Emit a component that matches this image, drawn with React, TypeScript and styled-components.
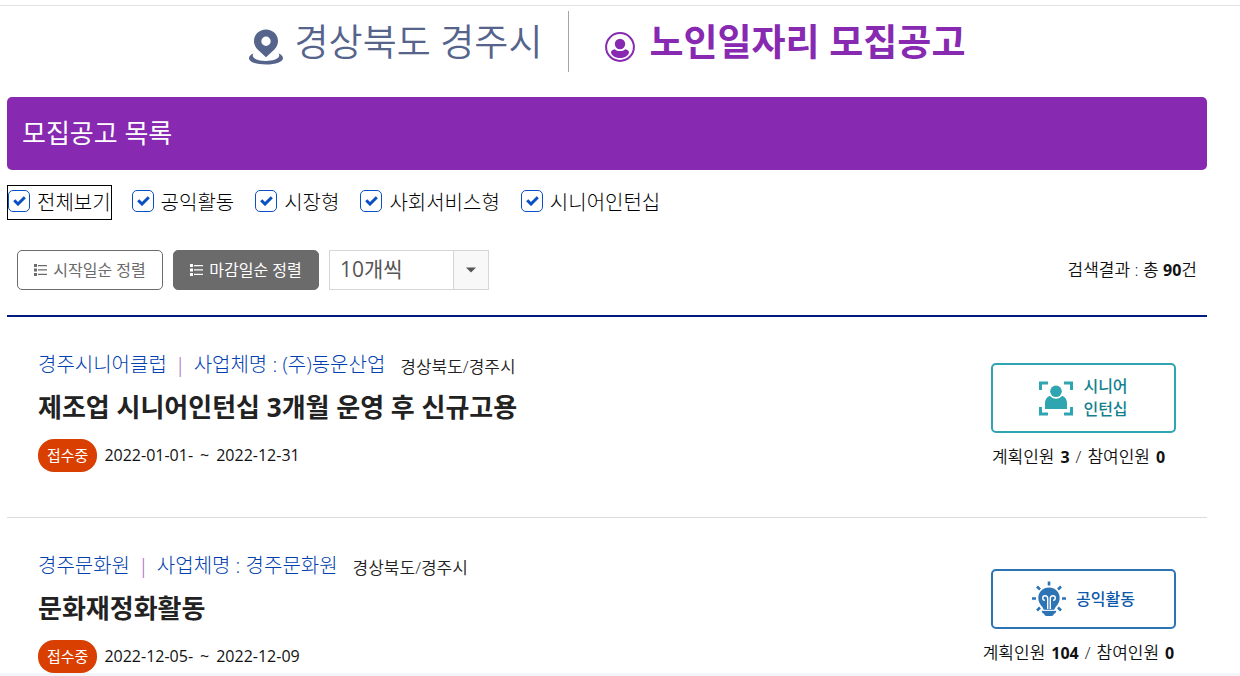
import React, { useState } from "react";
import styled, { createGlobalStyle, css } from "styled-components";

const GlobalStyle = createGlobalStyle`
  * { box-sizing: border-box; }
  body {
    margin: 0;
    background: #fff;
    color: #111;
    font-family: "Open Sans", "Noto Sans CJK KR", sans-serif;
    font-size: 16px;
    line-height: 24px;
  }
  h1, h2, h3, p, ul { margin: 0; padding: 0; }
  ul { list-style: none; }
  button, select, input { font: inherit; margin: 0; }
`;

const Page = styled.div`
  margin-top: 5px;
  border-top: 1px solid #e2e2e2;
`;

const Container = styled.main`
  padding: 0 33px 0 7px;
`;

const Header = styled.header`
  display: flex;
  justify-content: center;
  align-items: center;
  padding: 5px 0 25px;
`;

const Region = styled.p`
  display: flex;
  align-items: center;
  gap: 12px;
  height: 61px;
  padding-right: 26px;
  border-right: 1px solid #a5a5a5;
  color: #56648c;
  font-size: 37px;
  font-weight: 350;
  line-height: 61px;
  white-space: nowrap;
  svg { margin-top: 11px; }
`;

const PageTitle = styled.h1`
  display: flex;
  align-items: center;
  gap: 14px;
  padding-left: 36px;
  color: #872ab1;
  font-size: 37px;
  font-weight: 700;
  line-height: 61px;
  white-space: nowrap;
  svg { margin-top: 10px; }
`;

const Banner = styled.h2`
  padding: 16px 15px;
  border-radius: 5px;
  background: #872ab1;
  color: #fff;
  font-size: 26px;
  font-weight: 400;
  line-height: 41px;
`;

const Filters = styled.div`
  display: flex;
  flex-wrap: wrap;
  gap: 19px;
  padding-top: 15px;
`;

const FilterLabel = styled.label<{ $outlined?: boolean }>`
  display: flex;
  align-items: center;
  gap: 7px;
  height: 35px;
  border: 1px solid ${(p) => (p.$outlined ? "#000" : "transparent")};
  color: #000;
  font-size: 20px;
  font-weight: 300;
  white-space: nowrap;
`;

const TickWrap = styled.span`
  position: relative;
  display: flex;
  margin-top: -3px;
  svg { position: absolute; left: 5px; top: 6px; pointer-events: none; }
`;

const Tick = styled.input`
  appearance: none;
  width: 22px;
  height: 22px;
  border: 1px solid #0a50c4;
  border-radius: 5px;
  background: #fff;
  &:not(:checked) + svg { display: none; }
`;

const Toolbar = styled.div`
  display: flex;
  align-items: center;
  gap: 10px;
  padding: 30px 10px 25px;
  border-bottom: 2px solid #001b80;
`;

const SortButton = styled.button<{ $active?: boolean }>`
  display: flex;
  justify-content: center;
  align-items: center;
  gap: 6px;
  width: 146px;
  height: 40px;
  padding: 0;
  border: 1px solid #6b6b6b;
  border-radius: 5px;
  background: ${(p) => (p.$active ? "#6b6b6b" : "#fff")};
  color: ${(p) => (p.$active ? "#fff" : "#6b6b6b")};
  font-size: 16px;
  white-space: nowrap;
`;

const SelectWrap = styled.span`
  position: relative;
  display: flex;
`;

const Select = styled.select`
  appearance: none;
  width: 160px;
  height: 40px;
  padding: 0 40px 2px 10px;
  border: 1px solid #d6d6d6;
  border-radius: 0;
  background: #fff;
  color: #555;
  font-size: 21px;
  font-weight: 400;
`;

const SelectArrow = styled.span`
  position: absolute;
  inset: 1px 1px 1px auto;
  width: 35px;
  display: flex;
  justify-content: center;
  align-items: center;
  border-left: 1px solid #d6d6d6;
  background: #f8f8f8;
  pointer-events: none;
`;

const ResultCount = styled.p`
  margin-left: auto;
  font-size: 17px;
  font-weight: 350;
  b { font-size: 16px; font-weight: 700; }
`;

const Row = styled.li`
  display: flex;
  justify-content: space-between;
  padding: 33px 22px 45px 31px;
  border-bottom: 1px solid #dcdcdc;
  &:last-child { padding-bottom: 0; border-bottom: 0; }
`;

const Meta = styled.div`
  display: flex;
  align-items: center;
  gap: 15px;
  height: 30px;
  white-space: nowrap;
`;

const OrgLink = styled.a`
  display: flex;
  gap: 8px;
  color: #0040b0;
  font-size: 20px;
  font-weight: 300;
  line-height: 30px;
  text-decoration: none;
  i { color: #a060c0; font-style: normal; }
`;

const Area = styled.span`
  padding-top: 3px;
  color: #222;
  font-size: 17px;
  font-weight: 350;
`;

const JobTitle = styled.h3`
  margin: 7px 0 12px;
  color: #222;
  font-size: 26px;
  font-weight: 700;
  line-height: 40px;
`;

const Period = styled.div`
  display: flex;
  align-items: center;
  gap: 7px;
`;

const Dates = styled.p`
  display: flex;
  gap: 7px;
  padding-bottom: 2px;
`;

const Status = styled.span`
  padding: 0 9px;
  border-radius: 16px;
  background: #d93f00;
  color: #fff;
  font-size: 15px;
  font-weight: 400;
  line-height: 33px;
`;

const Side = styled.div`
  display: flex;
  flex-direction: column;
  justify-content: center;
  align-items: center;
  gap: 12px;
  width: 203px;
  padding-top: 10px;
`;

const tones = {
  teal: css`border-color: #2fa5b2; color: #12818e;`,
  blue: css`border-color: #2d74b5; color: #0d59a9;`,
};

const TypeBadge = styled.div<{ $tone: "teal" | "blue" }>`
  display: flex;
  justify-content: center;
  align-items: center;
  gap: 10px;
  width: 185px;
  min-height: 60px;
  padding: 10px 0;
  border: 2px solid;
  border-radius: 5px;
  font-size: 16px;
  font-weight: 500;
  line-height: 23px;
  ${(p) => tones[p.$tone]}
  span { display: block; }
`;

const Counts = styled.p`
  display: flex;
  gap: 6px;
  padding-right: 10px;
  font-size: 17px;
  font-weight: 350;
  white-space: nowrap;
  b { font-size: 16px; font-weight: 700; }
`;

const Footer = styled.footer`
  height: 3px;
  background: #f2f5f9;
`;

const PinIcon = () => (
  <svg width="34" height="36" viewBox="0 0 34 36" fill="currentColor" aria-hidden="true">
    <path
      fillRule="evenodd"
      d="M17 .5C10.300 .5 5 5.500 5 12.200c0 3.200 1.500 6 3.600 8.200L17 28.300l8.400-7.900c2.100-2.200 3.600-5 3.600-8.200C29 5.500 23.700.5 17 .5Zm0 7a4.700 4.700 0 1 1 0 9.400 4.700 4.700 0 0 1 0-9.400Z"
    />
    <path d="M4.600 24.600C1.700 25.600 0 27.300 0 29.200c0 3.600 7.200 6.300 17 6.300s17-2.700 17-6.300c0-1.900-1.700-3.600-4.600-4.600.9 1 1.100 1.900.6 3C28.800 30.300 23.600 32 17 32S5.200 30.300 4 27.600c-.5-1.100-.3-2 .6-3Z" />
  </svg>
);

const UserIcon = () => (
  <svg width="30" height="30" viewBox="0 0 30 30" fill="currentColor" aria-hidden="true">
    <circle cx="15" cy="15" r="13.900" fill="none" stroke="currentColor" strokeWidth="2" />
    <circle cx="15" cy="12" r="5.200" />
    <path d="M9.600 17.200c-2.200.5-3.600 1.600-3.600 3C6 23 10 26 15 26s9-3 9-5.800c0-1.400-1.400-2.500-3.600-3-1.400 1.200-3.300 1.900-5.400 1.900s-4-.7-5.400-1.900Z" />
  </svg>
);

const CheckIcon = () => (
  <svg width="13" height="10" viewBox="0 0 13 10" fill="none" stroke="#0a50c4" strokeWidth="3" aria-hidden="true">
    <path d="M1.200 4.300 5 8 11.800 1.300" />
  </svg>
);

const ListIcon = () => (
  <svg width="13" height="12" viewBox="0 0 13 12" fill="currentColor" aria-hidden="true">
    <path d="M0 0h3v3H0zM0 4.500h3v3H0zM0 9h3v3H0zM4 1h9v1.300H4zM4 5.300h9v1.300H4zM4 9.700h9V11H4z" />
  </svg>
);

const InternIcon = () => (
  <svg width="34" height="35" viewBox="0 0 34 35" fill="#2fa5b2" aria-hidden="true">
    <path
      d="M1.500 9V2H9M25 2h7.500v7M32.500 26v7H25M9 33H1.500v-7"
      fill="none"
      stroke="#2fa5b2"
      strokeWidth="3"
    />
    <circle cx="17" cy="10.300" r="5.800" />
    <path d="M10.800 14.700C7.700 16 6 18.600 6 22v6h22v-6c0-3.400-1.700-6-4.800-7.300a7.700 7.700 0 0 1-12.400 0Z" />
  </svg>
);

const BulbIcon = () => (
  <svg width="34" height="36" viewBox="0 0 34 36" fill="#2d74b5" aria-hidden="true">
    <path
      d="M17 .5v4M5 5.500l3 3M29 5.500l-3 3M0 17.500h4M30 17.500h4M5 29.500l3-3M29 29.500l-3-3"
      stroke="#2d74b5"
      strokeWidth="2.600"
    />
    <path d="M17 6.500C11 6.500 6.300 11 6.300 17c0 4 2 6.500 3.700 8.600.9 1.200 1.500 2.100 1.700 3.400h10.600c.2-1.300.8-2.200 1.700-3.400 1.700-2.100 3.700-4.600 3.700-8.600C27.700 11 23 6.500 17 6.500Z" />
    <path
      d="M15.700 28V17.500c0-1.700-1.200-2.800-2.600-2.800s-2.400 1-2.400 2.300 1 2.200 2.200 2.200M18.300 28V17.500c0-1.700 1.200-2.800 2.600-2.800s2.400 1 2.400 2.300-1 2.200-2.200 2.200"
      fill="none"
      stroke="#fff"
      strokeWidth="1.400"
    />
    <path d="M9.800 29.800h14.400c0 1.600-.8 2.700-2.200 3-.5 1.500-1.300 2.200-2.500 2.200h-5c-1.200 0-2-.7-2.500-2.200-1.400-.3-2.200-1.400-2.200-3Z" />
    <path d="M10.500 29.200h13" stroke="#fff" strokeWidth=".8" />
  </svg>
);

const filterNames = ["전체보기", "공익활동", "시장형", "사회서비스형", "시니어인턴십"];

const jobs = [
  {
    org: "경주시니어클럽",
    company: "사업체명 : (주)동운산업",
    area: "경상북도/경주시",
    title: "제조업 시니어인턴십 3개월 운영 후 신규고용",
    from: "2022-01-01-",
    to: "2022-12-31",
    tone: "teal" as const,
    type: ["시니어", "인턴십"],
    planned: 3,
    joined: 0,
  },
  {
    org: "경주문화원",
    company: "사업체명 : 경주문화원",
    area: "경상북도/경주시",
    title: "문화재정화활동",
    from: "2022-12-05-",
    to: "2022-12-09",
    tone: "blue" as const,
    type: ["공익활동"],
    planned: 104,
    joined: 0,
  },
];

export default function App() {
  const [checked, setChecked] = useState(filterNames.map(() => true));
  const [sort, setSort] = useState("end");
  const toggle = (index: number) =>
    setChecked((prev) => prev.map((value, i) => (i === index ? !value : value)));

  return (
    <Page>
      <GlobalStyle />
      <Container>
        <Header>
          <Region>
            <PinIcon />
            경상북도 경주시
          </Region>
          <PageTitle>
            <UserIcon />
            노인일자리 모집공고
          </PageTitle>
        </Header>
        <Banner>모집공고 목록</Banner>
        <Filters>
          {filterNames.map((name, i) => (
            <FilterLabel key={name} $outlined={i === 0}>
              <TickWrap>
                <Tick type="checkbox" checked={checked[i]} onChange={() => toggle(i)} />
                <CheckIcon />
              </TickWrap>
              {name}
            </FilterLabel>
          ))}
        </Filters>
        <Toolbar>
          <SortButton type="button" $active={sort === "start"} onClick={() => setSort("start")}>
            <ListIcon />
            시작일순 정렬
          </SortButton>
          <SortButton type="button" $active={sort === "end"} onClick={() => setSort("end")}>
            <ListIcon />
            마감일순 정렬
          </SortButton>
          <SelectWrap>
            <Select aria-label="목록 개수" defaultValue="10">
              <option value="10">10개씩</option>
              <option value="20">20개씩</option>
              <option value="50">50개씩</option>
            </Select>
            <SelectArrow>
              <svg width="10" height="6" viewBox="0 0 10 6" fill="#555" aria-hidden="true">
                <path d="M0 .5h10L5 5.500Z" />
              </svg>
            </SelectArrow>
          </SelectWrap>
          <ResultCount>
            검색결과 : 총 <b>90</b>건
          </ResultCount>
        </Toolbar>
        <ul>
          {jobs.map((job) => (
            <Row key={job.title}>
              <div>
                <Meta>
                  <OrgLink href="#">
                    <span>{job.org}</span>
                    <i>|</i>
                    <span>{job.company}</span>
                  </OrgLink>
                  <Area>{job.area}</Area>
                </Meta>
                <JobTitle>{job.title}</JobTitle>
                <Period>
                  <Status>접수중</Status>
                  <Dates>
                    <span>{job.from}</span>
                    <span>~</span>
                    <span>{job.to}</span>
                  </Dates>
                </Period>
              </div>
              <Side>
                <TypeBadge $tone={job.tone}>
                  {job.tone === "teal" ? <InternIcon /> : <BulbIcon />}
                  <div>
                    {job.type.map((line) => (
                      <span key={line}>{line}</span>
                    ))}
                  </div>
                </TypeBadge>
                <Counts>
                  <span>계획인원</span>
                  <b>{job.planned}</b>
                  <span>/</span>
                  <span>참여인원</span>
                  <b>{job.joined}</b>
                </Counts>
              </Side>
            </Row>
          ))}
        </ul>
      </Container>
      <Footer />
    </Page>
  );
}
